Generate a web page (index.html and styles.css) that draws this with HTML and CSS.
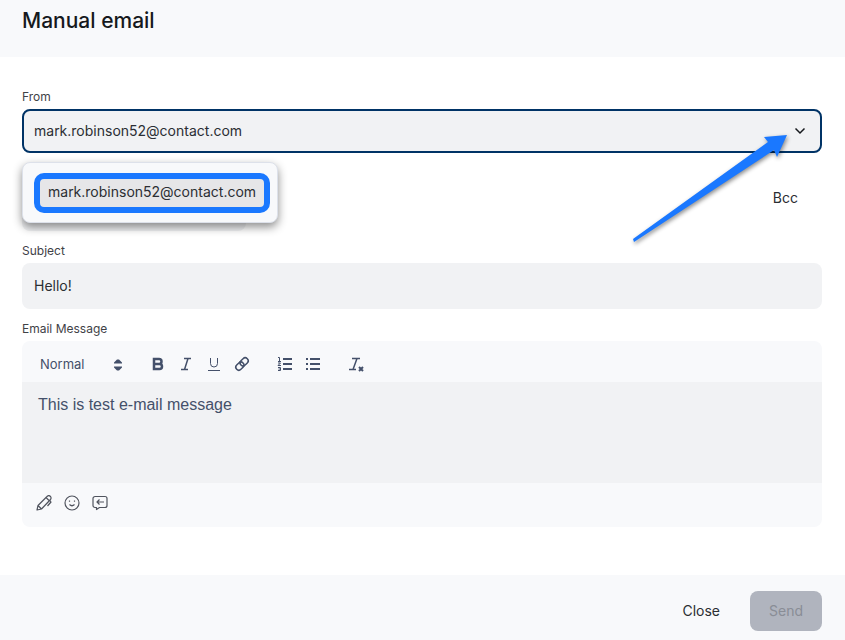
FILE: index.html
```
<!DOCTYPE html>
<html lang="en">
<head>
    <meta charset="UTF-8">
    <meta name="viewport" content="width=device-width, initial-scale=1.0">
    <title>Manual email</title>
    <link rel="stylesheet" href="styles.css">
</head>
<body>

<header class="header">
    <h1>Manual email</h1>
</header>

<form class="content">
    <label for="from">From</label>
    <div class="from-field">
        <select id="from" class="field from-select">
            <option>mark.robinson52@contact.com</option>
        </select>
        <svg class="chevron" width="12" height="8" viewBox="0 0 12 8"><path d="M1.5 1.5L6 6l4.500-4.500" fill="none" stroke="#16191d" stroke-width="1.500"/></svg>
        <div class="from-menu">
            <button type="button" class="from-option">mark.robinson52@contact.com</button>
        </div>
        <svg class="arrow" width="200" height="130" viewBox="0 0 200 130">
            <path d="M165 10L142 12L146 17L11 114L12 117L152 25L155 32Z" fill="#1a78ff"/>
        </svg>
    </div>

    <div class="recipients">
        <div class="recipient-box"></div>
        <button type="button" class="text-button">Bcc</button>
    </div>

    <label for="subject">Subject</label>
    <input type="text" id="subject" class="field subject" value="Hello!">

    <label for="message">Email Message</label>
    <div class="editor">
        <div class="toolbar">
            <div class="format">
                <select class="format-select" aria-label="Text format">
                    <option>Normal</option>
                </select>
                <svg class="sort" width="18" height="18" viewBox="0 0 18 18"><path class="fill" d="M5 7.500V6.500L8 3.500h2l3 3v1zM5 10.500v1l3 3h2l3-3v-1z"/></svg>
            </div>
            <div class="tools">
                <button type="button" aria-label="Bold"><svg viewBox="0 0 18 18"><path class="bold" d="M5 4h5a2.500 2.500 0 0 1 0 5H5zM5 9h5.500a2.500 2.500 0 0 1 0 5H5z"/></svg></button>
                <button type="button" aria-label="Italic"><svg viewBox="0 0 18 18"><path class="italic" d="M7 3.500h7M4 14.500h7M11 3.500L7.500 14.500"/></svg></button>
                <button type="button" aria-label="Underline"><svg viewBox="0 0 18 18"><path class="thin" d="M5.500 3v5.500a3.500 3.500 0 0 0 7 0V3M3 15.500h12"/></svg></button>
                <button type="button" aria-label="Link"><svg viewBox="0 0 18 18"><g class="link" transform="rotate(-45 9 9)"><rect x="1.500" y="6" width="9" height="6" rx="3"/><rect x="7.500" y="6" width="9" height="6" rx="3"/></g></svg></button>
            </div>
            <div class="tools">
                <button type="button" aria-label="Numbered list"><svg viewBox="0 0 18 18"><path d="M7 4h9M7 9h9M7 14h9"/><path class="thin" d="M2 2.500h1.500v4M2 6.500h3M2 8h2.500L2 10.500h3M2 12.500h2.500v3H2M2.500 14h2"/></svg></button>
                <button type="button" aria-label="Bullet list"><svg viewBox="0 0 18 18"><path d="M6 4h10M6 9h10M6 14h10M2 4h2M2 9h2M2 14h2"/></svg></button>
            </div>
            <div class="tools">
                <button type="button" aria-label="Clear formatting"><svg viewBox="0 0 18 18"><path class="italic" d="M5 3.500h8M2 14.500h7M10 3.500L6 14.500"/><path d="M12 12l4 4M16 12l-4 4"/></svg></button>
            </div>
        </div>
        <textarea id="message">This is test e-mail message</textarea>
        <div class="extras">
            <button type="button" aria-label="Signature"><svg viewBox="0 0 16 16"><path d="M1 15l1-4.500L11 1.500a2 2 0 0 1 3.500 3L5.500 14zM10 2.500l3.500 3.500M2 10.500l3.500 3.500M13.500 5l1.500 2-3.500 4"/></svg></button>
            <button type="button" aria-label="Emoji"><svg viewBox="0 0 16 16"><circle cx="8" cy="8" r="7"/><path d="M5.500 9.500q2.500 2.500 5 0M5.500 5.500v1.200M10.500 5.500v1.200"/></svg></button>
            <button type="button" aria-label="Canned reply"><svg viewBox="0 0 16 16"><path d="M3 1.500h10a2 2 0 0 1 2 2v7a2 2 0 0 1-2 2H7.500l-3 2v-2H3a2 2 0 0 1-2-2v-7a2 2 0 0 1 2-2zM12 7H5M7.500 4.500L5 7l2.500 2.500"/></svg></button>
        </div>
    </div>
</form>

<footer class="footer">
    <button type="button" class="text-button">Close</button>
    <button type="button" class="send-button" disabled>Send</button>
</footer>

</body>
</html>
```
FILE: styles.css
```
* {
    box-sizing: border-box;
}

body {
    margin: 0;
    font-family: Inter, "Noto Sans", sans-serif;
    font-size: 14px;
    color: #2b2e33;
    background-color: #fff;
}

button, input, select {
    font: inherit;
    color: inherit;
}

button {
    border: none;
    background: none;
    padding: 0 0 2px;
    cursor: pointer;
}

.header {
    background-color: #f8f9fb;
    padding: 8px 22px 23px;
}

h1 {
    margin: 0;
    font-size: 21px;
    line-height: 26px;
    font-weight: 500;
    color: #16191d;
}

.content {
    padding: 32px 23px 48px 22px;
}

label {
    display: block;
    margin-bottom: 4px;
    font-size: 12px;
    line-height: 16px;
    color: #3f4247;
}

.field {
    display: block;
    width: 100%;
    height: 44px;
    padding: 0 12px 2px;
    border: none;
    border-radius: 8px;
    background-color: #f1f2f4;
}

.from-field {
    position: relative;
}

.from-select {
    appearance: none;
    padding: 0 10px 2px;
    border: 2px solid #003366;
}

.chevron {
    position: absolute;
    top: 18px;
    right: 16px;
    pointer-events: none;
}

.from-menu {
    position: absolute;
    top: 53px;
    left: 0;
    z-index: 1;
    padding: 10px 7px 9px 11px;
    border: 1px solid #dde1ea;
    border-radius: 8px;
    background-color: #f8f9fb;
    box-shadow: 0 4px 10px rgba(0, 0, 0, 0.45);
}

.from-option {
    display: block;
    height: 40px;
    padding: 0 8px 3px;
    border: 6px solid #1a78ff;
    border-radius: 10px;
    background-color: #e6e6e8;
}

.arrow {
    position: absolute;
    top: 16px;
    right: 0;
    z-index: 2;
    pointer-events: none;
    filter: drop-shadow(1px 2px 2px rgba(0, 0, 0, 0.45));
}

.recipients {
    display: flex;
    justify-content: space-between;
    align-items: center;
    margin: 12px 0;
    padding-right: 24px;
}

.recipient-box {
    width: 224px;
    height: 66px;
    border-radius: 8px;
    background-color: #f1f2f4;
}

.subject {
    height: 46px;
    margin-bottom: 12px;
}

.editor {
    border-radius: 8px;
    background-color: #f8f9fb;
    overflow: hidden;
}

.toolbar {
    display: flex;
    align-items: center;
    gap: 19px;
    height: 41px;
    padding: 4px 16px 0;
    color: #44506a;
}

.format {
    display: flex;
    position: relative;
    width: 89px;
}

.format-select {
    appearance: none;
    width: 100%;
    padding: 0 2px;
    border: none;
    background: none;
    font-size: 13px;
}

.sort {
    position: absolute;
    right: 0;
    pointer-events: none;
}

.tools {
    display: flex;
    gap: 4px;
}

.tools button {
    width: 24px;
    height: 24px;
    padding: 3px;
}

.tools svg {
    display: block;
    fill: none;
    stroke: #44506a;
    stroke-width: 2;
}

.tools .bold {
    stroke-width: 2.5;
}

.tools .thin {
    stroke-width: 1;
}

.tools .link,
.tools .italic {
    stroke-width: 1.5;
}

.fill {
    fill: #44506a;
}

textarea {
    display: block;
    width: 100%;
    height: 101px;
    padding: 12px 16px;
    border: none;
    resize: none;
    outline: none;
    font-family: "Liberation Sans", Arial, sans-serif;
    font-size: 16px;
    line-height: 22px;
    color: #44506a;
    background-color: #f1f2f4;
}

.extras {
    display: flex;
    gap: 12px;
    height: 44px;
    padding: 0 14px 4px;
    align-items: center;
}

.extras button {
    padding: 0;
}

.extras svg {
    display: block;
    width: 16px;
    height: 16px;
    fill: none;
    stroke: #50545e;
    stroke-width: 1.2;
    stroke-linejoin: round;
}

.footer {
    display: flex;
    justify-content: flex-end;
    align-items: center;
    gap: 30px;
    padding: 16px 23px 9px;
    background-color: #f8f9fb;
}

.send-button {
    width: 72px;
    height: 40px;
    border-radius: 8px;
    color: #898d96;
    background-color: #b0b4be;
}
```
